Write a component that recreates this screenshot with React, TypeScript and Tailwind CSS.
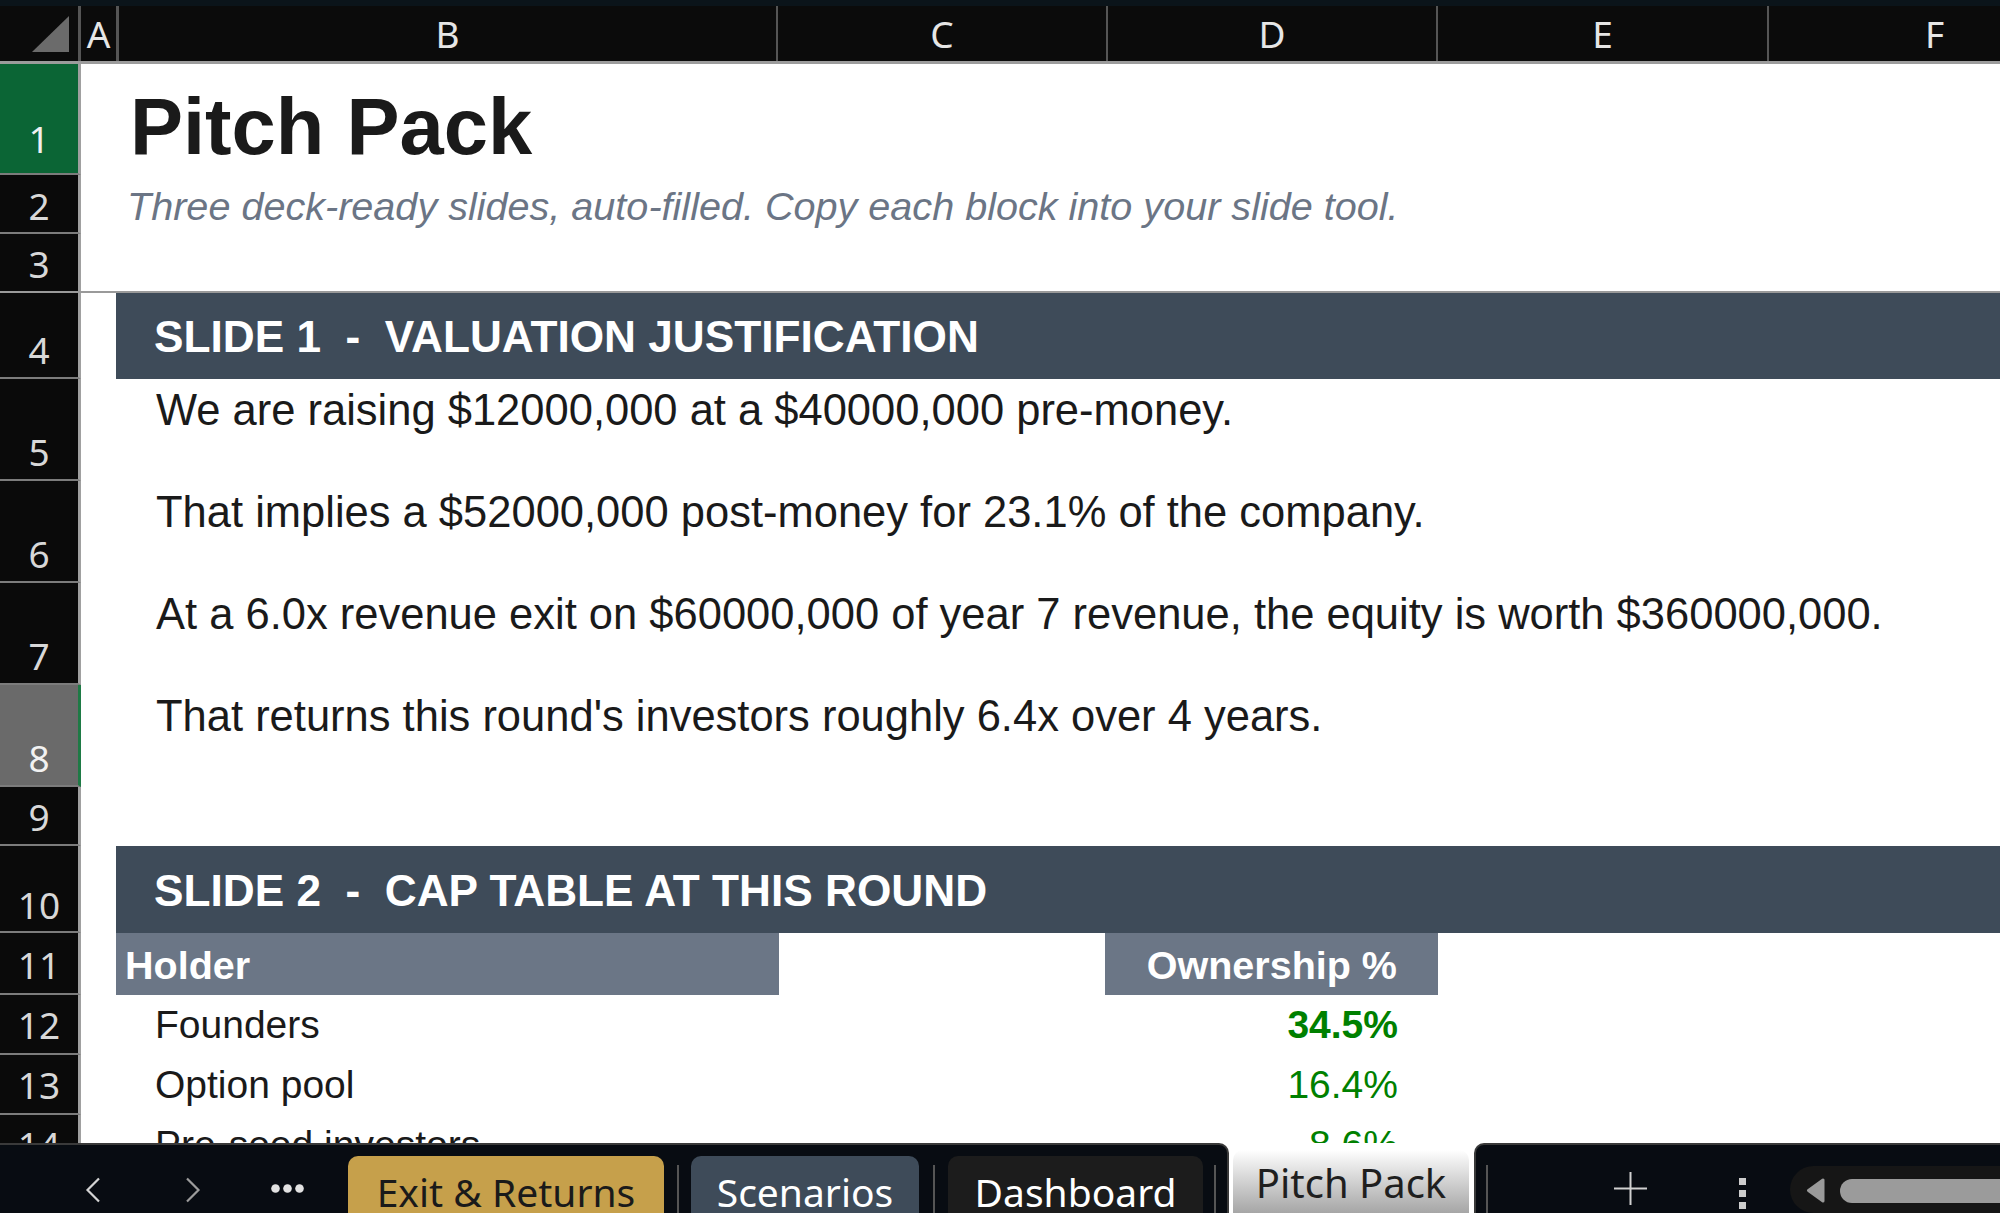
import React from "react";

const ARIAL = "font-['Liberation_Sans',Arial,sans-serif]";
const HEADFONT = "font-['Noto_Sans',sans-serif]";

type RowProps = {
  n: number;
  h: string;
  head?: string;
  pb?: string;
  noBorder?: boolean;
  children?: React.ReactNode;
};

function Row({
  n,
  h,
  head = "bg-[#0a0a0a] text-[#d8d8d8]",
  pb = "pb-[9px]",
  noBorder,
  children,
}: RowProps) {
  return (
    <div className={`flex shrink-0 ${h}`}>
      <div
        className={`w-[81px] shrink-0 flex items-end justify-center border-r-[3px] border-r-[#a0a0a0] ${
          noBorder ? "" : "border-b-2 border-b-[#7c7c7c]"
        } ${head} ${pb} ${HEADFONT} text-[37px] leading-none`}
      >
        {n}
      </div>
      <div className="relative flex-1 min-w-0">{children}</div>
    </div>
  );
}

function ColHead() {
  const sep = "w-[2px] shrink-0 bg-[#555555]";
  const cell = "shrink-0 flex items-end justify-center pb-[9px]";
  return (
    <div
      className={`flex h-[58px] shrink-0 overflow-hidden bg-[#0b0b0b] border-b-[3px] border-b-[#9c9c9c] ${HEADFONT} text-[37px] leading-none text-[#e6e6e6]`}
    >
      <div className="w-[78px] shrink-0">
        <svg width="78" height="55" viewBox="0 0 78 55">
          <polygon points="69,10 69,46 32,46" fill="#6b6b6b" />
        </svg>
      </div>
      <div className="w-[3px] shrink-0 bg-[#555555]" />
      <div className={`w-[35px] ${cell}`}>A</div>
      <div className="w-[3px] shrink-0 bg-[#555555]" />
      <div className={`w-[657px] ${cell}`}>B</div>
      <div className={sep} />
      <div className={`w-[328px] ${cell}`}>C</div>
      <div className={sep} />
      <div className={`w-[328px] ${cell}`}>D</div>
      <div className={sep} />
      <div className={`w-[329px] ${cell}`}>E</div>
      <div className={sep} />
      <div className={`w-[331px] ${cell}`}>F</div>
    </div>
  );
}

function BodyLine({ children }: { children: React.ReactNode }) {
  return (
    <div
      className={`ml-[35px] pl-[40px] pt-[10px] whitespace-nowrap text-[43.5px] leading-none text-[#1a1a1a] ${ARIAL}`}
    >
      {children}
    </div>
  );
}

function SlideBar({ children, pt }: { children: React.ReactNode; pt: string }) {
  return (
    <div
      className={`ml-[35px] h-full bg-[#3e4b59] pl-[38px] ${pt} whitespace-pre text-[44.2px] font-bold leading-none text-white ${ARIAL}`}
    >
      {children}
    </div>
  );
}

function CapRow({
  name,
  value,
  bold,
}: {
  name: string;
  value: string;
  bold?: boolean;
}) {
  return (
    <div className={`flex h-full text-[39px] leading-none ${ARIAL}`}>
      <div className="w-[35px] shrink-0" />
      <div className="w-[663px] shrink-0 pl-[39px] pt-[10px] whitespace-nowrap text-[#1a1a1a]">
        {name}
      </div>
      <div className="w-[326px] shrink-0" />
      <div
        className={`w-[333px] shrink-0 pr-[40px] pt-[10px] text-right whitespace-nowrap text-[#008000] ${
          bold ? "font-bold" : ""
        }`}
      >
        {value}
      </div>
    </div>
  );
}

function Tab({
  w,
  bg,
  children,
}: {
  w: string;
  bg: string;
  children: React.ReactNode;
}) {
  return (
    <div
      className={`${w} ${bg} shrink-0 mt-[11px] rounded-t-[10px] pt-[16px] text-center text-[39px] leading-none whitespace-nowrap overflow-hidden`}
    >
      {children}
    </div>
  );
}

function Sep({ w }: { w: string }) {
  return (
    <div className={`${w} shrink-0 flex justify-center pt-[20px]`}>
      <div className="w-[2px] bg-[#555555]" />
    </div>
  );
}

function TabBar() {
  return (
    <div className={`flex h-[70px] shrink-0 bg-white ${HEADFONT}`}>
      <div className="flex w-[1229px] shrink-0 rounded-tr-[10px] border-t-2 border-r-2 border-[#3a3a3a] bg-[#080c12]">
        <div className="w-[70px] shrink-0" />
        <div className="w-[46px] shrink-0 flex justify-center pt-[32px]">
          <svg width="16" height="26" viewBox="0 0 16 26">
            <path
              d="M14 1.5 L2.5 13 L14 24.5"
              fill="none"
              stroke="#d4d4d4"
              strokeWidth="2.2"
            />
          </svg>
        </div>
        <div className="w-[54px] shrink-0" />
        <div className="w-[46px] shrink-0 flex justify-center pt-[32px]">
          <svg width="16" height="26" viewBox="0 0 16 26">
            <path
              d="M2 1.5 L13.5 13 L2 24.5"
              fill="none"
              stroke="#9c9c9c"
              strokeWidth="2.2"
            />
          </svg>
        </div>
        <div className="w-[46px] shrink-0" />
        <div className="w-[50px] shrink-0 flex justify-center pt-[39px]">
          <svg width="33" height="9" viewBox="0 0 33 9">
            <circle cx="4.5" cy="4.5" r="4.3" fill="#e2e2e2" />
            <circle cx="16.5" cy="4.5" r="4.3" fill="#e2e2e2" />
            <circle cx="28.5" cy="4.5" r="4.3" fill="#e2e2e2" />
          </svg>
        </div>
        <div className="w-[36px] shrink-0" />
        <Tab w="w-[316px]" bg="bg-[#c6a04b] text-[#1a1a1a]">
          Exit &amp; Returns
        </Tab>
        <Sep w="w-[27px]" />
        <Tab w="w-[228px]" bg="bg-[#3e4b59] text-white">
          Scenarios
        </Tab>
        <Sep w="w-[29px]" />
        <Tab w="w-[255px]" bg="bg-[#1c1c1c] text-white">
          Dashboard
        </Tab>
        <Sep w="w-[24px]" />
      </div>

      <div className="flex w-[245px] shrink-0 bg-white pl-[4px] pt-[7px]">
        <div className="w-[236px] shrink-0 rounded-t-[10px] bg-linear-to-b from-white to-[#a6a6a6] pt-[13px] text-center text-[40px] leading-none text-[#1f1f1f] whitespace-nowrap">
          Pitch Pack
        </div>
      </div>

      <div className="flex flex-1 min-w-0 rounded-tl-[10px] border-t-2 border-l-2 border-[#3a3a3a] bg-[#080c12]">
        <div className="w-[10px] shrink-0" />
        <div className="w-[2px] shrink-0 mt-[20px] bg-[#555555]" />
        <div className="w-[126px] shrink-0" />
        <div className="w-[33px] shrink-0 pt-[27px]">
          <svg width="33" height="33" viewBox="0 0 33 33">
            <path d="M16.5 0 V33 M0 16.5 H33" stroke="#d0d0d0" strokeWidth="2" />
          </svg>
        </div>
        <div className="w-[92px] shrink-0" />
        <div className="w-[7px] shrink-0 pt-[33px]">
          <svg width="7" height="31" viewBox="0 0 7 31">
            <rect x="0" y="0" width="7" height="7" fill="#cdcdcd" />
            <rect x="0" y="12" width="7" height="7" fill="#cdcdcd" />
            <rect x="0" y="24" width="7" height="7" fill="#cdcdcd" />
          </svg>
        </div>
        <div className="w-[44px] shrink-0" />
        <div className="flex flex-1 min-w-0 mt-[21px] rounded-l-[40px] bg-[#161616] pl-[16px] pt-[12px]">
          <svg width="19" height="25" viewBox="0 0 19 25" className="shrink-0">
            <path
              d="M17 2 L17 23 L2.5 12.5 Z"
              fill="#9a9a9a"
              stroke="#9a9a9a"
              strokeWidth="3"
              strokeLinejoin="round"
            />
          </svg>
          <div className="w-[15px] shrink-0" />
          <div className="flex-1 h-[24px] mt-[1px] rounded-l-full bg-[#9b9b9b]" />
        </div>
      </div>
    </div>
  );
}

export default function App() {
  return (
    <div className="flex h-[1213px] w-[2000px] flex-col overflow-hidden bg-white">
      <div className="h-[6px] shrink-0 bg-[#0b141a]" />
      <ColHead />

      <div className="flex flex-1 min-h-0 flex-col overflow-hidden bg-white">
        <Row n={1} h="h-[111px]" head="bg-[#0b6535] text-[#f0f0f0]" pb="pb-[16px]">
          <div
            className={`pl-[49px] pt-[23px] whitespace-nowrap text-[79.5px] font-bold leading-none text-[#1a1a1a] ${ARIAL}`}
          >
            Pitch Pack
          </div>
        </Row>
        <Row n={2} h="h-[59px]" pb="pb-[8px]">
          <div
            className={`pl-[46px] pt-[12px] whitespace-nowrap text-[39.6px] italic leading-none text-[#6b7585] ${ARIAL}`}
          >
            Three deck-ready slides, auto-filled. Copy each block into your slide tool.
          </div>
        </Row>
        <Row n={3} h="h-[57px]" noBorder />
        <div className="h-[2px] shrink-0 bg-[#9a9a9a]" />
        <Row n={4} h="h-[86px]">
          <SlideBar pt="pt-[22px]">SLIDE 1  -  VALUATION JUSTIFICATION</SlideBar>
        </Row>
        <Row n={5} h="h-[102px]">
          <BodyLine>We are raising $12000,000 at a $40000,000 pre-money.</BodyLine>
        </Row>
        <Row n={6} h="h-[102px]">
          <BodyLine>That implies a $52000,000 post-money for 23.1% of the company.</BodyLine>
        </Row>
        <Row n={7} h="h-[102px]">
          <BodyLine>
            At a 6.0x revenue exit on $60000,000 of year 7 revenue, the equity is worth $360000,000.
          </BodyLine>
        </Row>
        <Row
          n={8}
          h="h-[102px]"
          head="bg-[#6a6a6a] text-[#f2f2f2] !border-r-[#1e7a45]"
        >
          <BodyLine>That returns this round's investors roughly 6.4x over 4 years.</BodyLine>
        </Row>
        <Row n={9} h="h-[59px]" />
        <Row n={10} h="h-[87px]" pb="pb-[8px]">
          <SlideBar pt="pt-[23px]">SLIDE 2  -  CAP TABLE AT THIS ROUND</SlideBar>
        </Row>
        <Row n={11} h="h-[62px]" pb="pb-[10px]">
          <div className={`flex h-full text-[39.5px] font-bold leading-none text-white ${ARIAL}`}>
            <div className="w-[35px] shrink-0" />
            <div className="w-[663px] shrink-0 bg-[#6b7686] pl-[9px] pt-[13px] whitespace-nowrap">
              Holder
            </div>
            <div className="w-[326px] shrink-0" />
            <div className="w-[333px] shrink-0 bg-[#6b7686] pr-[41px] pt-[13px] text-right whitespace-nowrap">
              Ownership %
            </div>
          </div>
        </Row>
        <Row n={12} h="h-[60px]" pb="pb-[10px]">
          <CapRow name="Founders" value="34.5%" bold />
        </Row>
        <Row n={13} h="h-[60px]" pb="pb-[10px]">
          <CapRow name="Option pool" value="16.4%" />
        </Row>
        <Row n={14} h="h-[60px]" pb="pb-[10px]">
          <CapRow name="Pre-seed investors" value="8.6%" />
        </Row>
      </div>

      <TabBar />
    </div>
  );
}
